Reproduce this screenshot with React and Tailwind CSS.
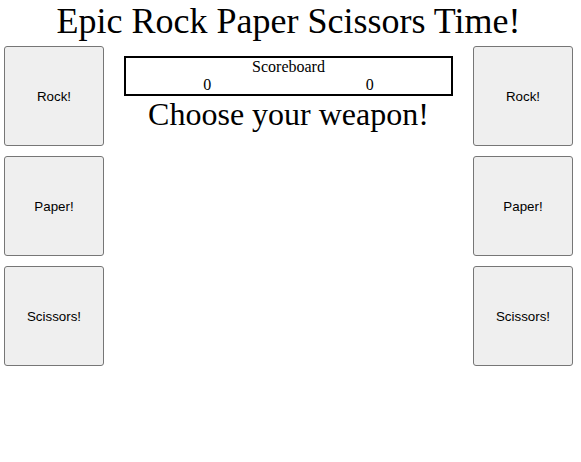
import React from 'react';

const serif = { fontFamily: '"Liberation Serif", "Times New Roman", serif' };

function WeaponButton({ label }) {
  return (
    <button
      className="w-[100px] h-[100px] pt-[2px] bg-[#efefef] border border-[#767676] rounded-[3px] text-[13.33px] text-black"
      style={{ fontFamily: '"Liberation Sans", Arial, sans-serif' }}
    >
      {label}
    </button>
  );
}

function WeaponColumn() {
  return (
    <div className="flex flex-col gap-[10px]">
      <WeaponButton label="Rock!" />
      <WeaponButton label="Paper!" />
      <WeaponButton label="Scissors!" />
    </div>
  );
}

export default function App() {
  return (
    <div className="w-[577px] bg-white text-black" style={serif}>
      {/* Title */}
      <h1 className="h-[42px] text-[36px] leading-[42px] text-center">
        Epic Rock Paper Scissors Time!
      </h1>

      <div className="flex gap-[20px] px-[4px] mt-[4px]">
        <WeaponColumn />

        {/* Middle */}
        <div className="flex-1 pt-[10px]">
          <div className="border-2 border-black text-[16px] leading-[18px]">
            <div className="text-center">Scoreboard</div>
            <div className="grid grid-cols-2 text-center">
              <span>0</span>
              <span>0</span>
            </div>
          </div>
          <div className="text-[32px] leading-[37px] text-center">Choose your weapon!</div>
        </div>

        <WeaponColumn />
      </div>
    </div>
  );
}
